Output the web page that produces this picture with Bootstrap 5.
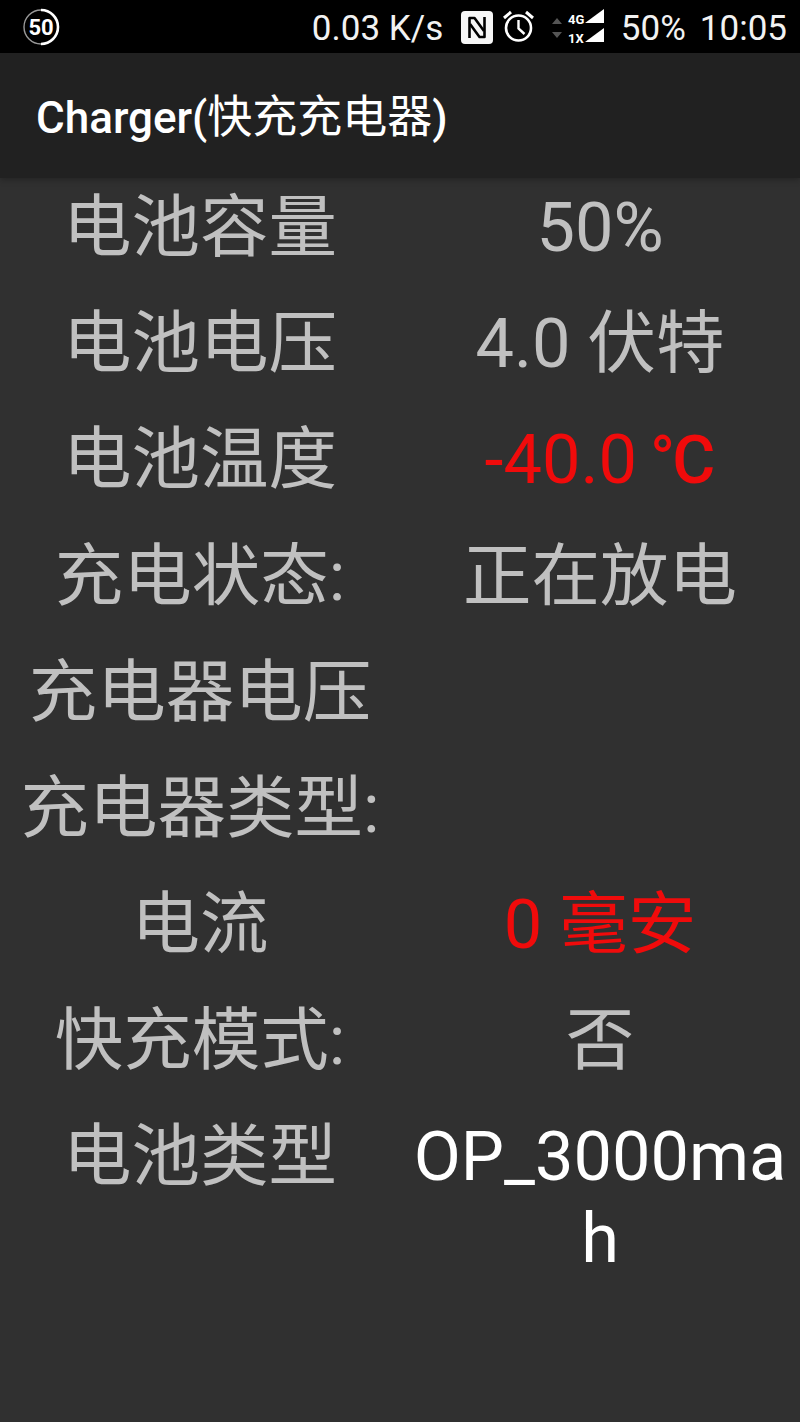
<!DOCTYPE html>
<html lang="zh">
<head>
<meta charset="utf-8">
<title>Charger</title>
<link href="https://cdn.jsdelivr.net/npm/bootstrap@5.3.0/dist/css/bootstrap.min.css" rel="stylesheet">
<style>
html,body{height:100%;}
body{background:#303030;font-family:Roboto,"Noto Sans CJK SC",sans-serif;overflow:hidden;}
.sbar{height:53px;background:#000;color:#f2f2f2;font-size:35px;line-height:1;padding:0 13px 0 22px;}
.sbar svg{display:block;flex:none;}
.sbar-speed{width:134px;margin-right:15px;padding-top:4px;}
.sbar-nfc{margin-right:9px;margin-top:1px;}
.sbar-arrows{margin-left:15px;margin-top:3px;}
.sbar-signal{margin-left:3px;margin-top:1px;}
.sbar-batt{width:66px;margin-left:-2px;padding-top:4px;}
.sbar-time{margin-left:13px;padding-top:4px;}
.tbar{height:125px;background:#212121;box-shadow:0 2px 6px rgba(0,0,0,.25);padding-left:36px;padding-top:5px;color:#fff;font-size:44px;font-weight:500;position:relative;}
.tbar-cjk{font-weight:400;font-size:45px;}
.info-list{padding-top:9px;row-gap:34px;--bs-gutter-x:0;margin:0;}
.info-cell{font-size:68.5px;line-height:82px;color:#c0c0c0;text-align:center;padding:0;}
.info-val{padding:0 6px;overflow-wrap:anywhere;}
.txt-red{color:#f00b0b;}
.txt-white{color:#fff;}
.deg-sign{font-size:66px;font-weight:500;letter-spacing:-3px;margin-left:-4px;margin-right:3px;}
</style>
</head>
<body>
<div class="sbar d-flex align-items-center">
  <svg width="38" height="38" viewBox="0 0 38 38"><circle cx="19" cy="19" r="17" fill="none" stroke="#999" stroke-width="1.4"/><path d="M19 2a17 17 0 0 1 0 34" fill="none" stroke="#fff" stroke-width="2.6"/><text x="19" y="27" text-anchor="middle" font-family="Roboto" font-weight="700" font-size="22" fill="#fff">50</text></svg>
  <div class="ms-auto d-flex align-items-center">
    <span class="sbar-speed">0.03 K/s</span>
    <svg class="sbar-nfc" width="32" height="33" viewBox="0 0 32 33"><rect width="32" height="33" rx="4" fill="#f6f6f6"/><path d="M8.5 27V7h5l9.5 13" fill="none" stroke="#000" stroke-width="2.6" stroke-linejoin="round"/><path d="M23.5 6v20h-5L9 13" fill="none" stroke="#000" stroke-width="2.6" stroke-linejoin="round"/></svg>
    <svg width="33" height="33" viewBox="0 0 33 33"><circle cx="16.5" cy="18" r="12.5" fill="none" stroke="#fff" stroke-width="2.6"/><path d="M16.5 10v8.5l6 5.5" fill="none" stroke="#fff" stroke-width="2.4"/><path d="M2 8l7-6M31 8l-7-6" stroke="#fff" stroke-width="3"/></svg>
    <svg class="sbar-arrows" width="14" height="24" viewBox="0 0 14 24"><path d="M7 2l5 6H2zM7 22l5-6H2z" fill="#555"/></svg>
    <svg class="sbar-signal" width="56" height="38" viewBox="0 0 56 38"><text x="1" y="16" font-family="Roboto" font-weight="700" font-size="13" fill="#fff">4G</text><path d="M18 15L37 1v14z" fill="#fff"/><text x="1" y="35" font-family="Roboto" font-weight="700" font-size="13" fill="#fff">1X</text><path d="M18 34L37 20v14z" fill="#fff"/></svg>
    <span class="sbar-batt">50%</span>
    <span class="sbar-time">10:05</span>
  </div>
</div>
<div class="tbar d-flex align-items-center"><span>Charger(<span class="tbar-cjk">快充充电器</span>)</span></div>
<div class="row info-list">
  <div class="col-6 info-cell">电池容量</div><div class="col-6 info-cell info-val">50%</div>
  <div class="col-6 info-cell">电池电压</div><div class="col-6 info-cell info-val">4.0 伏特</div>
  <div class="col-6 info-cell">电池温度</div><div class="col-6 info-cell info-val txt-red">-40.0 <span class="deg-sign">°C</span></div>
  <div class="col-6 info-cell">充电状态:</div><div class="col-6 info-cell info-val">正在放电</div>
  <div class="col-6 info-cell">充电器电压</div><div class="col-6 info-cell info-val"></div>
  <div class="col-6 info-cell">充电器类型:</div><div class="col-6 info-cell info-val"></div>
  <div class="col-6 info-cell">电流</div><div class="col-6 info-cell info-val txt-red">0 毫安</div>
  <div class="col-6 info-cell">快充模式:</div><div class="col-6 info-cell info-val">否</div>
  <div class="col-6 info-cell">电池类型</div><div class="col-6 info-cell info-val txt-white">OP_3000mah</div>
</div>
</body>
</html>
